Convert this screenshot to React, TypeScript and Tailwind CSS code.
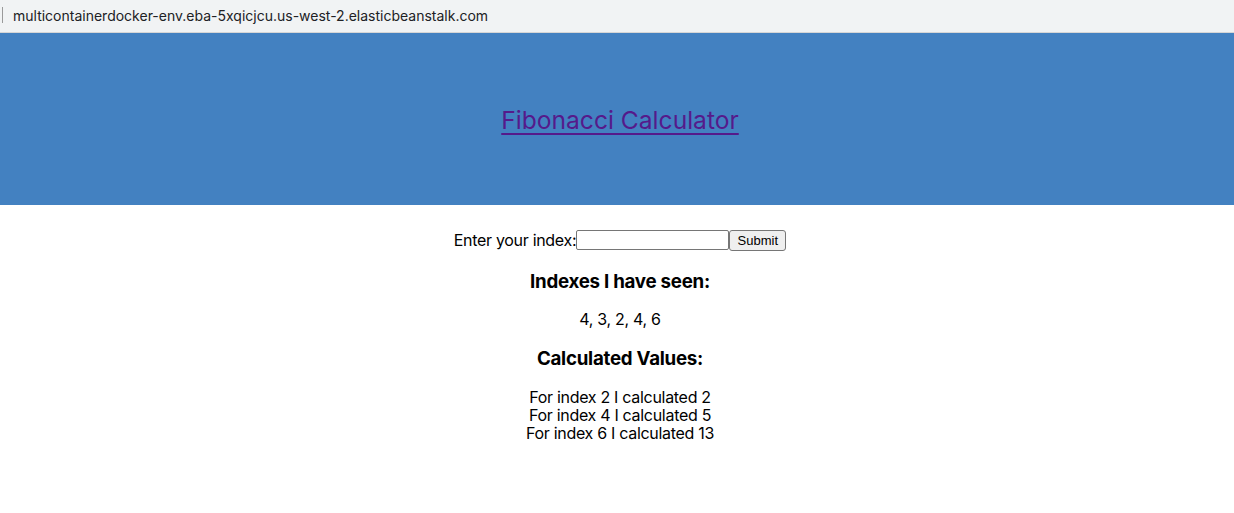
export default function App() {
  return (
    <div className="min-h-[513px] bg-white" style={{ fontFamily: "Inter, 'Noto Sans', sans-serif" }}>
      <div className="relative h-[33px] bg-[#f1f3f4] border-b border-[#d6d6d6] flex items-center">
        <div className="absolute left-[2px] top-[7px] w-px h-[16px] bg-[#9a9a9a]" />
        <span className="ml-[13px] mb-[1px] text-[14px] text-[#202124] leading-none">
          multicontainerdocker-env.eba-5xqicjcu.us-west-2.elasticbeanstalk.com
        </span>
      </div>
      <header className="h-[172px] bg-[#4381c1] flex items-center justify-center pl-[6px]">
        <a href="#" className="text-[24.6px] text-[#551a8b] underline decoration-[1.5px] underline-offset-[4px] mt-[3px]">
          Fibonacci Calculator
        </a>
      </header>
      <div className="flex flex-col items-center text-black text-[16px] tracking-[-0.3px] pl-[6px]">
        <div className="mt-[25px] h-[20px] flex items-center">
          <span className="leading-none">Enter your index:</span>
          <input className="w-[153px] h-[20px] border border-[#767676] rounded-[2px] bg-white px-1 text-[13px]" />
          <button
            className="h-[21px] w-[57px] border border-[#767676] rounded-[3px] bg-[#efefef] text-[13px] text-black leading-none tracking-normal"
            style={{ fontFamily: "'Liberation Sans', Arial, sans-serif" }}
          >
            Submit
          </button>
        </div>
        <h3 className="mt-[21px] text-[18.72px] font-bold leading-[22px] tracking-[-0.25px]">Indexes I have seen:</h3>
        <p className="mt-[17px] leading-[18px]">4, 3, 2, 4, 6</p>
        <h3 className="mt-[20px] text-[18.72px] font-bold leading-[22px] tracking-[-0.25px]">Calculated Values:</h3>
        <div className="mt-[18px] flex flex-col items-center leading-[18px]">
          <div>For index 2 I calculated 2</div>
          <div>For index 4 I calculated 5</div>
          <div>For index 6 I calculated 13</div>
        </div>
      </div>
    </div>
  );
}
